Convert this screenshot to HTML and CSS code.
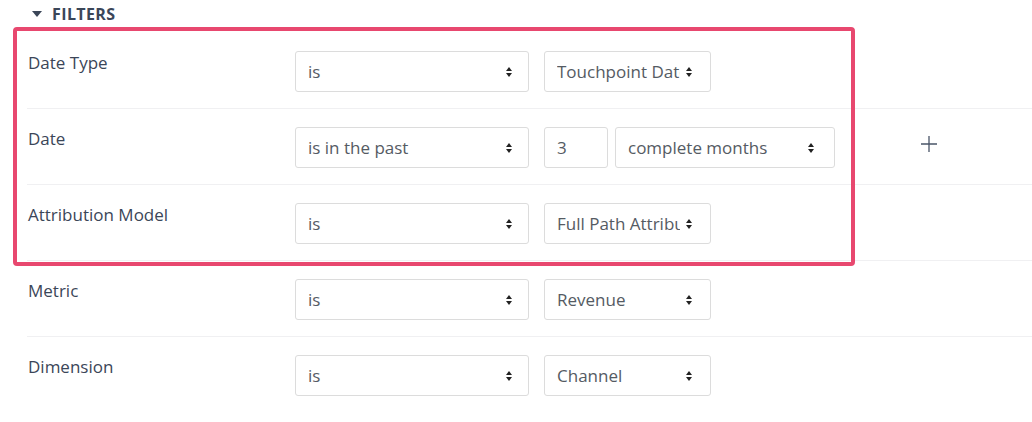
FILE: index.html
```html
<!DOCTYPE html>
<html>
<head>
<meta charset="utf-8">
<link rel="stylesheet" href="styles.css">
</head>
<body>
<div class="page">
  <div class="header">
    <svg class="caret" width="10" height="6" viewBox="0 0 10 6"><path d="M0 0 H10 L5 6 Z" fill="#3b4658"/></svg>
    <span class="title">FILTERS</span>
  </div>
  <div class="filters">
    <div class="row">
      <div class="label">Date Type</div>
      <div class="controls">
        <div class="select w-op"><span class="val">is</span><svg class="arr" width="6" height="10" viewBox="0 0 6 10"><path d="M0 4 L3 0 L6 4 Z M0 6 L6 6 L3 10 Z" fill="#222"/></svg></div>
        <div class="select w-val"><span class="val">Touchpoint Date</span><svg class="arr" width="6" height="10" viewBox="0 0 6 10"><path d="M0 4 L3 0 L6 4 Z M0 6 L6 6 L3 10 Z" fill="#222"/></svg></div>
      </div>
    </div>
    <div class="row">
      <div class="label">Date</div>
      <div class="controls">
        <div class="select w-op"><span class="val">is in the past</span><svg class="arr" width="6" height="10" viewBox="0 0 6 10"><path d="M0 4 L3 0 L6 4 Z M0 6 L6 6 L3 10 Z" fill="#222"/></svg></div>
        <div class="pair">
          <div class="input">3</div>
          <div class="select w-unit"><span class="val">complete months</span><svg class="arr" width="6" height="10" viewBox="0 0 6 10"><path d="M0 4 L3 0 L6 4 Z M0 6 L6 6 L3 10 Z" fill="#222"/></svg></div>
        </div>
        <svg class="plus" width="16" height="16" viewBox="0 0 16 16"><path d="M8 0 V16 M0 8 H16" stroke="#4a5568" stroke-width="1.3"/></svg>
      </div>
    </div>
    <div class="row">
      <div class="label">Attribution Model</div>
      <div class="controls">
        <div class="select w-op"><span class="val">is</span><svg class="arr" width="6" height="10" viewBox="0 0 6 10"><path d="M0 4 L3 0 L6 4 Z M0 6 L6 6 L3 10 Z" fill="#222"/></svg></div>
        <div class="select w-val"><span class="val">Full Path Attribution</span><svg class="arr" width="6" height="10" viewBox="0 0 6 10"><path d="M0 4 L3 0 L6 4 Z M0 6 L6 6 L3 10 Z" fill="#222"/></svg></div>
      </div>
    </div>
    <div class="row">
      <div class="label">Metric</div>
      <div class="controls">
        <div class="select w-op"><span class="val">is</span><svg class="arr" width="6" height="10" viewBox="0 0 6 10"><path d="M0 4 L3 0 L6 4 Z M0 6 L6 6 L3 10 Z" fill="#222"/></svg></div>
        <div class="select w-val"><span class="val">Revenue</span><svg class="arr" width="6" height="10" viewBox="0 0 6 10"><path d="M0 4 L3 0 L6 4 Z M0 6 L6 6 L3 10 Z" fill="#222"/></svg></div>
      </div>
    </div>
    <div class="row last">
      <div class="label">Dimension</div>
      <div class="controls">
        <div class="select w-op"><span class="val">is</span><svg class="arr" width="6" height="10" viewBox="0 0 6 10"><path d="M0 4 L3 0 L6 4 Z M0 6 L6 6 L3 10 Z" fill="#222"/></svg></div>
        <div class="select w-val"><span class="val">Channel</span><svg class="arr" width="6" height="10" viewBox="0 0 6 10"><path d="M0 4 L3 0 L6 4 Z M0 6 L6 6 L3 10 Z" fill="#222"/></svg></div>
      </div>
    </div>
    <div class="highlight"></div>
  </div>
</div>
</body>
</html>
```

FILE: styles.css
```css
html, body {
  margin: 0;
  padding: 0;
  background: #fff;
}
body {
  font-family: "Open Sans", "DejaVu Sans", sans-serif;
  color: #3b4658;
}
.page {
  width: 1032px;
  height: 422px;
  overflow: hidden;
  position: relative;
}
.header {
  height: 28px;
  display: flex;
  align-items: center;
  padding-left: 32px;
  gap: 10px;
}
.caret {
  display: block;
}
.title {
  font-weight: 700;
  font-size: 16px;
  letter-spacing: 0.4px;
  color: #3b4658;
  line-height: 28px;
}
.filters {
  margin-top: 5px;
  padding-left: 27px;
}
.row {
  box-sizing: border-box;
  height: 76px;
  display: flex;
  border-bottom: 1px solid #f0f0f2;
}
.row.last {
  border-bottom: none;
}
.label {
  width: 268px;
  padding-left: 1px;
  box-sizing: border-box;
  padding-top: 19px;
  font-size: 17px;
  line-height: 22px;
  color: #3b4658;
}
.controls {
  display: flex;
  gap: 15px;
  padding-top: 18px;
  align-items: flex-start;
}
.pair {
  display: flex;
  gap: 7px;
}
.select, .input {
  box-sizing: border-box;
  height: 41px;
  border: 1px solid #dcdcdc;
  border-radius: 3px;
  display: flex;
  align-items: center;
  padding: 0 12px 0 12px;
  font-size: 17px;
  color: #555b63;
  background: #fff;
}
.select .val {
  flex: 1;
  white-space: nowrap;
  overflow: hidden;
  min-width: 0;
}
.select .arr {
  flex: none;
  margin-left: 6px;
}
.w-op { width: 234px; padding-right: 16px; }
.w-val { width: 167px; padding-right: 18px; }
.w-unit { width: 220px; padding-right: 20px; }
.input { width: 64px; }
.plus {
  margin-left: 71px;
  margin-top: 9px;
  display: block;
}
.highlight {
  position: absolute;
  left: 13px;
  top: 27px;
  width: 842px;
  height: 239px;
  box-sizing: border-box;
  border: 4px solid #e8486f;
  border-radius: 4px;
  pointer-events: none;
}
```
